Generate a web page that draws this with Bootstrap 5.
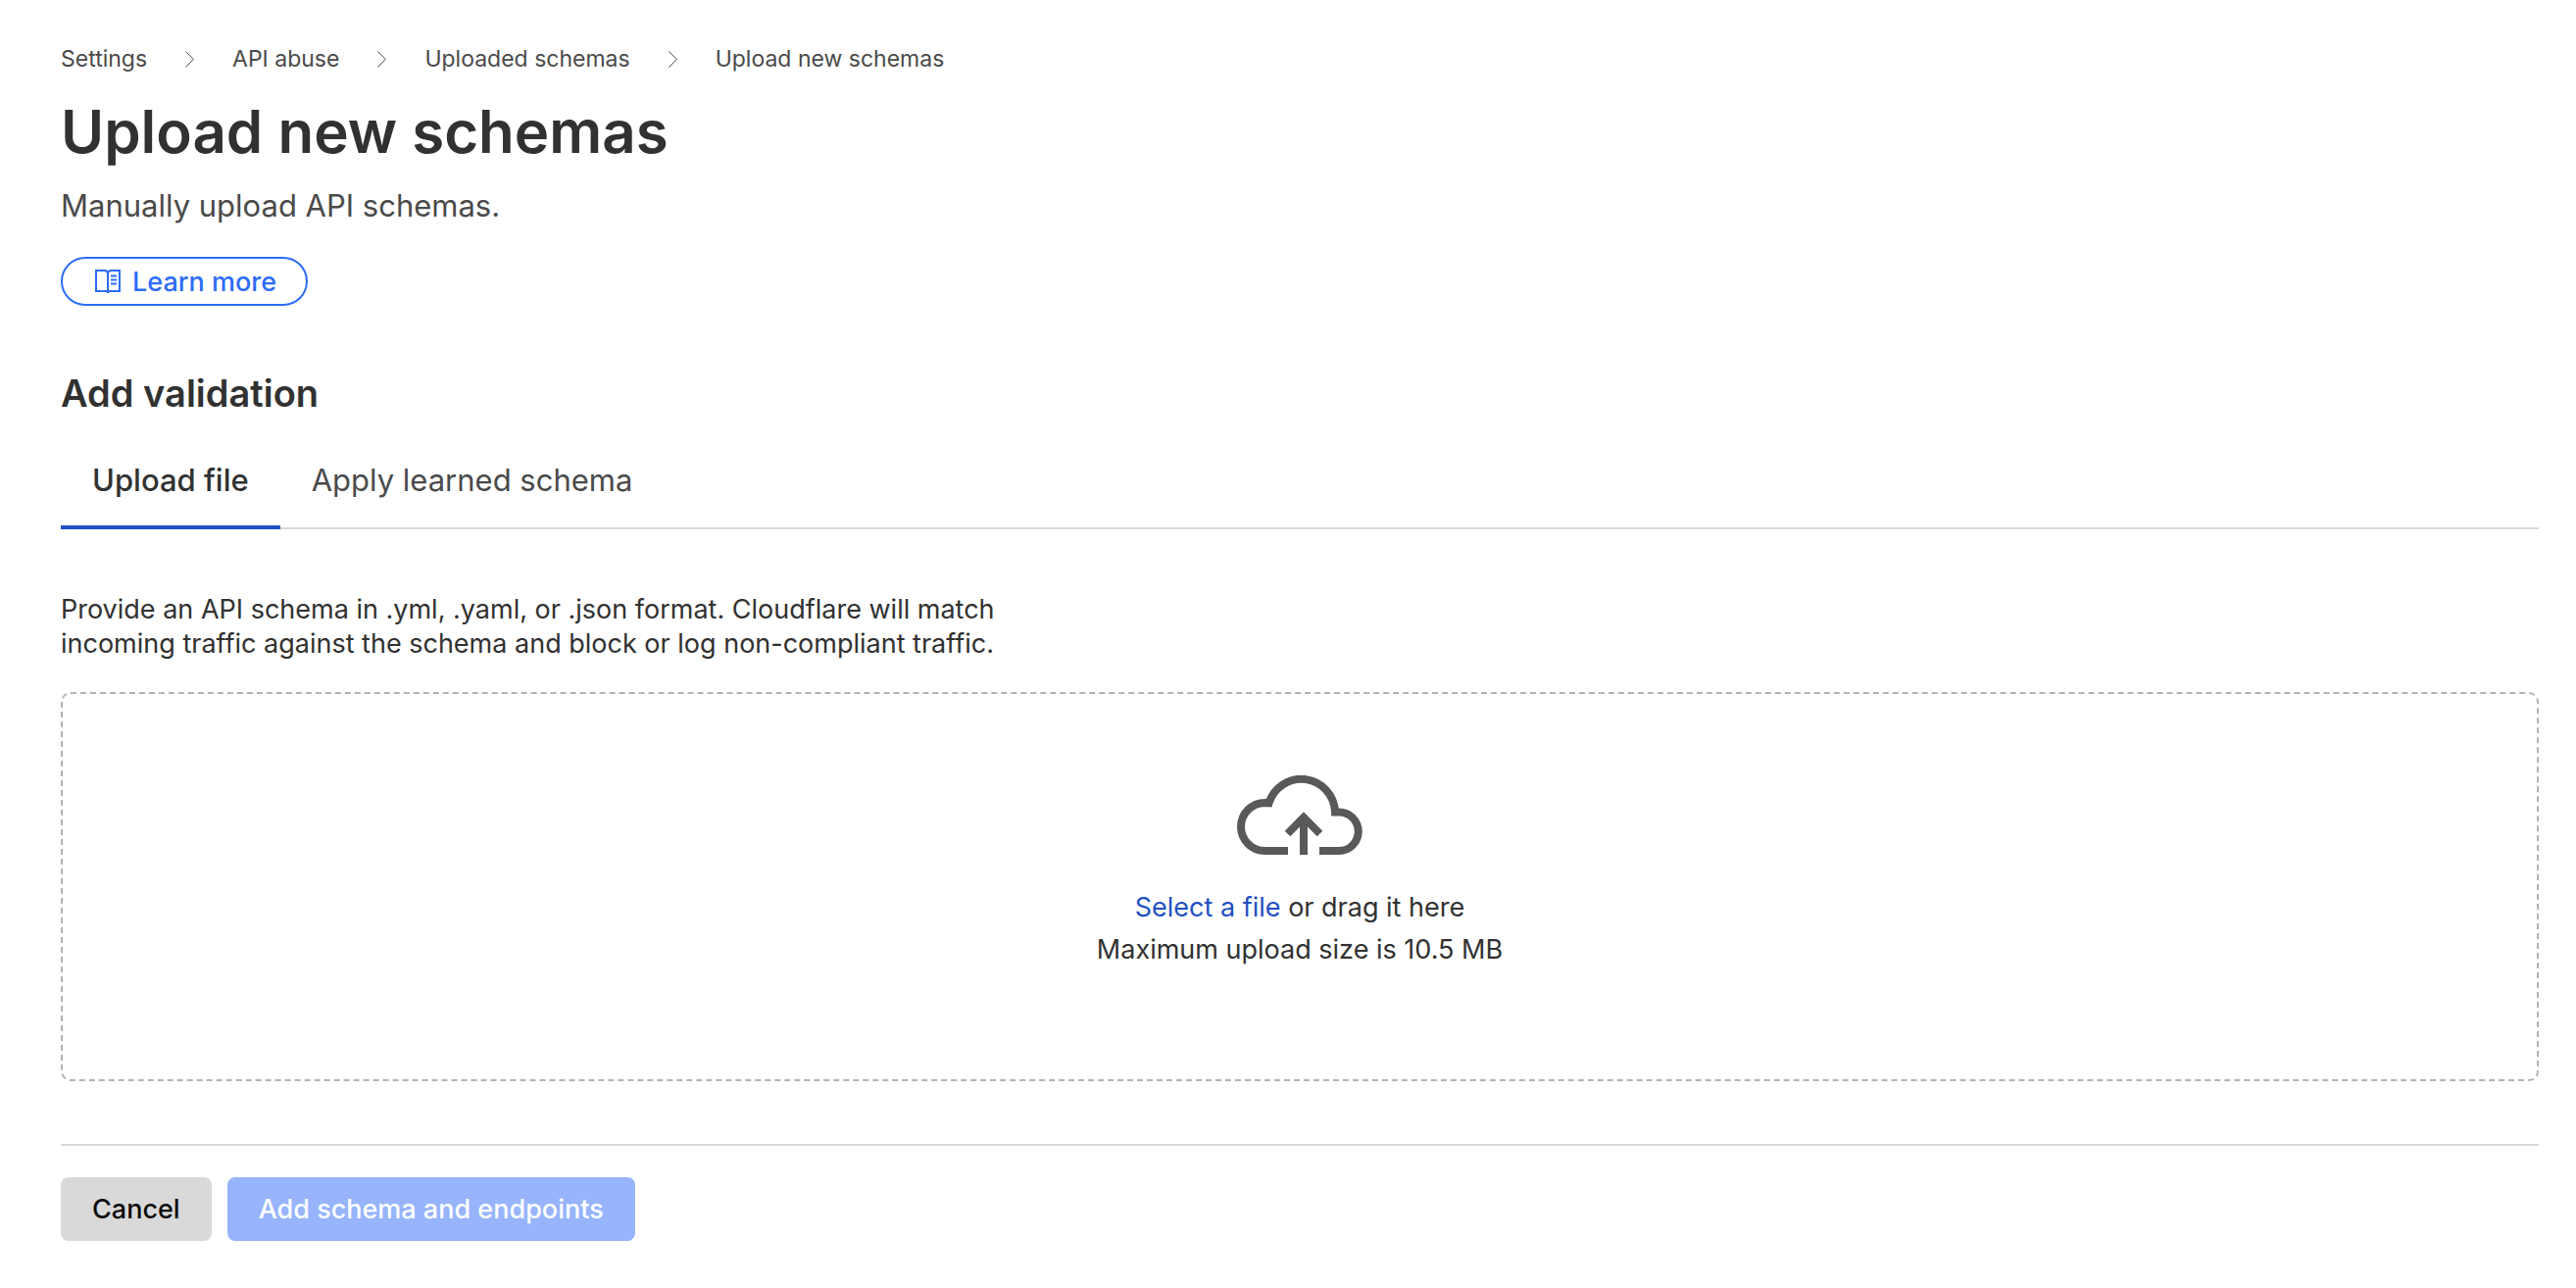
<!DOCTYPE html>
<html lang="en">
<head>
<meta charset="utf-8">
<meta name="viewport" content="width=device-width, initial-scale=1">
<title>Upload new schemas</title>
<link href="https://cdn.jsdelivr.net/npm/bootstrap@5.3.0/dist/css/bootstrap.min.css" rel="stylesheet">
<style>
  body { font-family: Inter, "Liberation Sans", sans-serif; font-size: 27px; line-height: 35px; color: #313131; background: #fff; }
  .page-shell { padding: 42px 38px 48px 62px; }
  .crumbs { font-size: 23px; line-height: 36px; }
  .crumbs a, .crumbs span { color: #4a4a4a; text-decoration: none; }
  .crumb-sep { margin: 0 39px; color: #4a4a4a; }
  .page-title { font-size: 60px; line-height: 80px; font-weight: 600; margin-top: 16px; }
  .page-intro { font-size: 31px; line-height: 40px; color: #4a4a4a; margin-top: 16px; }
  .btn-learn { --bs-btn-color: #2c6cf6; --bs-btn-border-color: #2c6cf6; --bs-btn-hover-bg: #edf3ff; --bs-btn-hover-color: #2c6cf6;
    font-size: 27px; line-height: 35px; font-weight: 500; border-width: 2px; padding: 6px 30px 5px 33px; gap: 12px; margin-top: 32px; }
  .section-title { font-size: 38px; line-height: 50px; font-weight: 600; margin-top: 64px; }
  .tab-line { border-bottom: 2px solid #d9d9d9; margin-top: 24px; }
  .tab-line .nav-link { font-size: 31px; line-height: 40px; color: #4a4a4a; background: none; padding: 20px 32px 26px; border: 0; border-bottom: 4px solid transparent; border-radius: 0; margin-bottom: -2px; }
  .tab-line .nav-link.active { color: #313131; font-weight: 500; border-bottom-color: #1f4fc1; }
  .tab-text { margin-top: 64px; max-width: 980px; }
  .drop-zone { border: 2px dashed #b3b3b3; border-radius: 10px; margin-top: 32px; padding: 83px 32px 111px; line-height: 43px; }
  .drop-zone svg { margin-bottom: 32px; }
  .pick-file { color: #1f4fc1; cursor: pointer; }
  .action-row { border-top: 2px solid #d9d9d9; margin-top: 64px; padding-top: 32px; }
  .action-row .btn { font-size: 27px; line-height: 35px; font-weight: 500; padding: 15px 32px; border: 0; border-radius: 8px; }
  .btn-cancel { --bs-btn-bg: #d9d9d9; --bs-btn-color: #0a0a0a; --bs-btn-hover-bg: #c9c9c9; }
  .btn-add { --bs-btn-disabled-bg: #97b4fd; --bs-btn-disabled-color: #fff; --bs-btn-disabled-opacity: 1; }
</style>
<script src="https://cdn.jsdelivr.net/npm/bootstrap@5.3.0/dist/js/bootstrap.bundle.min.js"></script>
</head>
<body>
<main class="page-shell">
  <nav aria-label="Breadcrumb">
    <ol class="crumbs list-unstyled d-flex flex-wrap mb-0">
      <li class="d-flex align-items-center"><a href="#">Settings</a>
        <svg class="crumb-sep" width="9" height="17" viewBox="0 0 9 17" fill="none" stroke="currentColor" aria-hidden="true"><path d="M.5 .5 8.300 8.500 .5 16.500"/></svg></li>
      <li class="d-flex align-items-center"><a href="#">API abuse</a>
        <svg class="crumb-sep" width="9" height="17" viewBox="0 0 9 17" fill="none" stroke="currentColor" aria-hidden="true"><path d="M.5 .5 8.300 8.500 .5 16.500"/></svg></li>
      <li class="d-flex align-items-center"><a href="#">Uploaded schemas</a>
        <svg class="crumb-sep" width="9" height="17" viewBox="0 0 9 17" fill="none" stroke="currentColor" aria-hidden="true"><path d="M.5 .5 8.300 8.500 .5 16.500"/></svg></li>
      <li><span aria-current="page">Upload new schemas</span></li>
    </ol>
  </nav>

  <header>
    <h1 class="page-title mb-0">Upload new schemas</h1>
    <p class="page-intro mb-0">Manually upload API schemas.</p>
    <a href="#" class="btn btn-learn rounded-pill d-inline-flex align-items-center">
      <svg width="26" height="25" viewBox="0 0 26 25" fill="none" stroke="currentColor" stroke-width="2" aria-hidden="true">
        <path d="M13 24V4.500Q13 1 10 1H1V22H10.500Q13 22 13 24M13 4.500Q13 1 16 1H25V22H15.500Q13 22 13 24M16 6.500H22M16 10.500H22M16 14.500H22"/>
      </svg>
      Learn more
    </a>
  </header>

  <section>
    <h2 class="section-title mb-0">Add validation</h2>
    <ul class="tab-line nav" role="tablist">
      <li role="presentation"><button class="nav-link active" type="button" role="tab" aria-selected="true">Upload file</button></li>
      <li role="presentation"><button class="nav-link" type="button" role="tab" aria-selected="false">Apply learned schema</button></li>
    </ul>

    <form>
      <p class="tab-text mb-0">Provide an API schema in .yml, .yaml, or .json format. Cloudflare will match incoming traffic against the schema and block or log non-compliant traffic.</p>
      <div class="drop-zone d-flex flex-column align-items-center text-center position-relative">
        <svg width="128" height="81" viewBox="0 0 128 81" fill="none" stroke="#595959" stroke-width="8" aria-hidden="true">
          <path d="M52 77H28.500A24.500 24.500 0 0 1 28.500 28L32.500 28.300A34.500 34.500 0 0 1 100 37.500H104A19.750 19.750 0 0 1 104 77H84M68 81V43M51.500 59.500 68 43 84.500 59.500"/>
        </svg>
        <div><label for="schemaFile" class="pick-file">Select a file</label> or drag it here</div>
        <div>Maximum upload size is 10.5 MB</div>
        <input id="schemaFile" class="visually-hidden" type="file" accept=".yml,.yaml,.json">
      </div>
      <div class="action-row d-flex flex-wrap gap-3">
        <button type="button" class="btn btn-cancel">Cancel</button>
        <button type="submit" class="btn btn-add" disabled>Add schema and endpoints</button>
      </div>
    </form>
  </section>
</main>
</body>
</html>
